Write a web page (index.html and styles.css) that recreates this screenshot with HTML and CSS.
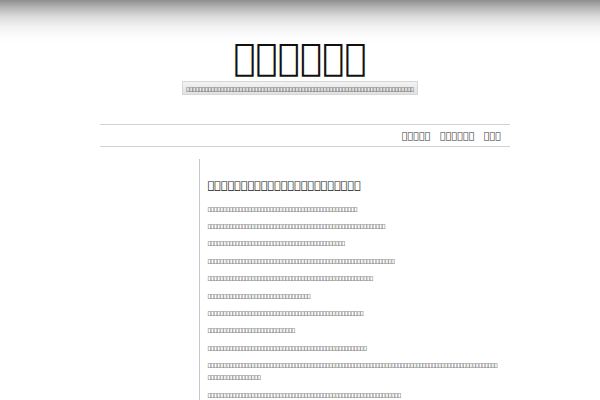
FILE: index.html
```html
<!DOCTYPE html>
<html>
<head>
<meta charset="utf-8">
<title>page</title>
<link rel="stylesheet" href="styles.css">
</head>
<body>
<header class="site-header">
  <h1 class="site-title">&#xF0000;&#xF0000;&#xF0000;&#xF0000;&#xF0000;&#xF0000;</h1>
  <div class="tagline-wrap">
    <p class="tagline">&#xF0000;&#xF0000;&#xF0000;&#xF0000;&#xF0000;&#xF0000;&#xF0000;&#xF0000;&#xF0000;&#xF0000;&#xF0000;&#xF0000;&#xF0000;&#xF0000;&#xF0000;&#xF0000;&#xF0000;&#xF0000;&#xF0000;&#xF0000;&#xF0000;&#xF0000;&#xF0000;&#xF0000;&#xF0000;&#xF0000;&#xF0000;&#xF0000;&#xF0000;&#xF0000;&#xF0000;&#xF0000;&#xF0000;&#xF0000;&#xF0000;&#xF0000;&#xF0000;&#xF0000;&#xF0000;&#xF0000;&#xF0000;&#xF0000;&#xF0000;&#xF0000;&#xF0000;&#xF0000;&#xF0000;&#xF0000;&#xF0000;&#xF0000;&#xF0000;&#xF0000;&#xF0000;&#xF0000;&#xF0000;&#xF0000;&#xF0000;&#xF0000;&#xF0000;&#xF0000;&#xF0000;&#xF0000;&#xF0000;&#xF0000;&#xF0000;&#xF0000;&#xF0000;&#xF0000;&#xF0000;&#xF0000;&#xF0000;&#xF0000;&#xF0000;</p>
  </div>
</header>
<nav class="nav">
  <a class="nav-item" href="#">&#xF0000;&#xF0000;&#xF0000;&#xF0000;&#xF0000;</a>
  <a class="nav-item" href="#">&#xF0000;&#xF0000;&#xF0000;&#xF0000;&#xF0000;&#xF0000;</a>
  <a class="nav-item" href="#">&#xF0000;&#xF0000;&#xF0000;</a>
</nav>
<div class="main">
  <aside class="sidebar"></aside>
  <article class="content">
    <h2 class="post-title">&#xF0000;&#xF0000;&#xF0000;&#xF0000;&#xF0000;&#xF0000;&#xF0000;&#xF0000;&#xF0000;&#xF0000;&#xF0000;&#xF0000;&#xF0000;&#xF0000;&#xF0000;&#xF0000;&#xF0000;&#xF0000;&#xF0000;&#xF0000;&#xF0000;&#xF0000;&#xF0000;</h2>
    <p>&#xF0000;&#xF0000;&#xF0000;&#xF0000;&#xF0000;&#xF0000;&#xF0000;&#xF0000;&#xF0000;&#xF0000;&#xF0000;&#xF0000;&#xF0000;&#xF0000;&#xF0000;&#xF0000;&#xF0000;&#xF0000;&#xF0000;&#xF0000;&#xF0000;&#xF0000;&#xF0000;&#xF0000;&#xF0000;&#xF0000;&#xF0000;&#xF0000;&#xF0000;&#xF0000;&#xF0000;&#xF0000;&#xF0000;&#xF0000;&#xF0000;&#xF0000;&#xF0000;&#xF0000;&#xF0000;&#xF0000;&#xF0000;&#xF0000;&#xF0000;&#xF0000;&#xF0000;&#xF0000;&#xF0000;&#xF0000;</p>
    <p>&#xF0000;&#xF0000;&#xF0000;&#xF0000;&#xF0000;&#xF0000;&#xF0000;&#xF0000;&#xF0000;&#xF0000;&#xF0000;&#xF0000;&#xF0000;&#xF0000;&#xF0000;&#xF0000;&#xF0000;&#xF0000;&#xF0000;&#xF0000;&#xF0000;&#xF0000;&#xF0000;&#xF0000;&#xF0000;&#xF0000;&#xF0000;&#xF0000;&#xF0000;&#xF0000;&#xF0000;&#xF0000;&#xF0000;&#xF0000;&#xF0000;&#xF0000;&#xF0000;&#xF0000;&#xF0000;&#xF0000;&#xF0000;&#xF0000;&#xF0000;&#xF0000;&#xF0000;&#xF0000;&#xF0000;&#xF0000;&#xF0000;&#xF0000;&#xF0000;&#xF0000;&#xF0000;&#xF0000;&#xF0000;&#xF0000;&#xF0000;</p>
    <p>&#xF0000;&#xF0000;&#xF0000;&#xF0000;&#xF0000;&#xF0000;&#xF0000;&#xF0000;&#xF0000;&#xF0000;&#xF0000;&#xF0000;&#xF0000;&#xF0000;&#xF0000;&#xF0000;&#xF0000;&#xF0000;&#xF0000;&#xF0000;&#xF0000;&#xF0000;&#xF0000;&#xF0000;&#xF0000;&#xF0000;&#xF0000;&#xF0000;&#xF0000;&#xF0000;&#xF0000;&#xF0000;&#xF0000;&#xF0000;&#xF0000;&#xF0000;&#xF0000;&#xF0000;&#xF0000;&#xF0000;&#xF0000;&#xF0000;&#xF0000;&#xF0000;</p>
    <p>&#xF0000;&#xF0000;&#xF0000;&#xF0000;&#xF0000;&#xF0000;&#xF0000;&#xF0000;&#xF0000;&#xF0000;&#xF0000;&#xF0000;&#xF0000;&#xF0000;&#xF0000;&#xF0000;&#xF0000;&#xF0000;&#xF0000;&#xF0000;&#xF0000;&#xF0000;&#xF0000;&#xF0000;&#xF0000;&#xF0000;&#xF0000;&#xF0000;&#xF0000;&#xF0000;&#xF0000;&#xF0000;&#xF0000;&#xF0000;&#xF0000;&#xF0000;&#xF0000;&#xF0000;&#xF0000;&#xF0000;&#xF0000;&#xF0000;&#xF0000;&#xF0000;&#xF0000;&#xF0000;&#xF0000;&#xF0000;&#xF0000;&#xF0000;&#xF0000;&#xF0000;&#xF0000;&#xF0000;&#xF0000;&#xF0000;&#xF0000;&#xF0000;&#xF0000;&#xF0000;</p>
    <p>&#xF0000;&#xF0000;&#xF0000;&#xF0000;&#xF0000;&#xF0000;&#xF0000;&#xF0000;&#xF0000;&#xF0000;&#xF0000;&#xF0000;&#xF0000;&#xF0000;&#xF0000;&#xF0000;&#xF0000;&#xF0000;&#xF0000;&#xF0000;&#xF0000;&#xF0000;&#xF0000;&#xF0000;&#xF0000;&#xF0000;&#xF0000;&#xF0000;&#xF0000;&#xF0000;&#xF0000;&#xF0000;&#xF0000;&#xF0000;&#xF0000;&#xF0000;&#xF0000;&#xF0000;&#xF0000;&#xF0000;&#xF0000;&#xF0000;&#xF0000;&#xF0000;&#xF0000;&#xF0000;&#xF0000;&#xF0000;&#xF0000;&#xF0000;&#xF0000;&#xF0000;&#xF0000;</p>
    <p>&#xF0000;&#xF0000;&#xF0000;&#xF0000;&#xF0000;&#xF0000;&#xF0000;&#xF0000;&#xF0000;&#xF0000;&#xF0000;&#xF0000;&#xF0000;&#xF0000;&#xF0000;&#xF0000;&#xF0000;&#xF0000;&#xF0000;&#xF0000;&#xF0000;&#xF0000;&#xF0000;&#xF0000;&#xF0000;&#xF0000;&#xF0000;&#xF0000;&#xF0000;&#xF0000;&#xF0000;&#xF0000;&#xF0000;</p>
    <p>&#xF0000;&#xF0000;&#xF0000;&#xF0000;&#xF0000;&#xF0000;&#xF0000;&#xF0000;&#xF0000;&#xF0000;&#xF0000;&#xF0000;&#xF0000;&#xF0000;&#xF0000;&#xF0000;&#xF0000;&#xF0000;&#xF0000;&#xF0000;&#xF0000;&#xF0000;&#xF0000;&#xF0000;&#xF0000;&#xF0000;&#xF0000;&#xF0000;&#xF0000;&#xF0000;&#xF0000;&#xF0000;&#xF0000;&#xF0000;&#xF0000;&#xF0000;&#xF0000;&#xF0000;&#xF0000;&#xF0000;&#xF0000;&#xF0000;&#xF0000;&#xF0000;&#xF0000;&#xF0000;&#xF0000;&#xF0000;&#xF0000;&#xF0000;</p>
    <p>&#xF0000;&#xF0000;&#xF0000;&#xF0000;&#xF0000;&#xF0000;&#xF0000;&#xF0000;&#xF0000;&#xF0000;&#xF0000;&#xF0000;&#xF0000;&#xF0000;&#xF0000;&#xF0000;&#xF0000;&#xF0000;&#xF0000;&#xF0000;&#xF0000;&#xF0000;&#xF0000;&#xF0000;&#xF0000;&#xF0000;&#xF0000;&#xF0000;</p>
    <p>&#xF0000;&#xF0000;&#xF0000;&#xF0000;&#xF0000;&#xF0000;&#xF0000;&#xF0000;&#xF0000;&#xF0000;&#xF0000;&#xF0000;&#xF0000;&#xF0000;&#xF0000;&#xF0000;&#xF0000;&#xF0000;&#xF0000;&#xF0000;&#xF0000;&#xF0000;&#xF0000;&#xF0000;&#xF0000;&#xF0000;&#xF0000;&#xF0000;&#xF0000;&#xF0000;&#xF0000;&#xF0000;&#xF0000;&#xF0000;&#xF0000;&#xF0000;&#xF0000;&#xF0000;&#xF0000;&#xF0000;&#xF0000;&#xF0000;&#xF0000;&#xF0000;&#xF0000;&#xF0000;&#xF0000;&#xF0000;&#xF0000;&#xF0000;&#xF0000;</p>
    <p>&#xF0000;&#xF0000;&#xF0000;&#xF0000;&#xF0000;&#xF0000;&#xF0000;&#xF0000;&#xF0000;&#xF0000;&#xF0000;&#xF0000;&#xF0000;&#xF0000;&#xF0000;&#xF0000;&#xF0000;&#xF0000;&#xF0000;&#xF0000;&#xF0000;&#xF0000;&#xF0000;&#xF0000;&#xF0000;&#xF0000;&#xF0000;&#xF0000;&#xF0000;&#xF0000;&#xF0000;&#xF0000;&#xF0000;&#xF0000;&#xF0000;&#xF0000;&#xF0000;&#xF0000;&#xF0000;&#xF0000;&#xF0000;&#xF0000;&#xF0000;&#xF0000;&#xF0000;&#xF0000;&#xF0000;&#xF0000;&#xF0000;&#xF0000;&#xF0000;&#xF0000;&#xF0000;&#xF0000;&#xF0000;&#xF0000;&#xF0000;&#xF0000;&#xF0000;&#xF0000;&#xF0000;&#xF0000;&#xF0000;&#xF0000;&#xF0000;&#xF0000;&#xF0000;&#xF0000;&#xF0000;&#xF0000;&#xF0000;&#xF0000;&#xF0000;&#xF0000;&#xF0000;&#xF0000;&#xF0000;&#xF0000;&#xF0000;&#xF0000;&#xF0000;&#xF0000;&#xF0000;&#xF0000;&#xF0000;&#xF0000;&#xF0000;&#xF0000;&#xF0000;&#xF0000;&#xF0000;&#xF0000;&#xF0000;&#xF0000;&#xF0000;&#xF0000;&#xF0000;&#xF0000;&#xF0000;&#xF0000;&#xF0000;&#xF0000;&#xF0000;&#xF0000;&#xF0000;&#xF0000;&#xF0000;&#xF0000;&#xF0000;&#xF0000;</p>
    <p>&#xF0000;&#xF0000;&#xF0000;&#xF0000;&#xF0000;&#xF0000;&#xF0000;&#xF0000;&#xF0000;&#xF0000;&#xF0000;&#xF0000;&#xF0000;&#xF0000;&#xF0000;&#xF0000;&#xF0000;&#xF0000;&#xF0000;&#xF0000;&#xF0000;&#xF0000;&#xF0000;&#xF0000;&#xF0000;&#xF0000;&#xF0000;&#xF0000;&#xF0000;&#xF0000;&#xF0000;&#xF0000;&#xF0000;&#xF0000;&#xF0000;&#xF0000;&#xF0000;&#xF0000;&#xF0000;&#xF0000;&#xF0000;&#xF0000;&#xF0000;&#xF0000;&#xF0000;&#xF0000;&#xF0000;&#xF0000;&#xF0000;&#xF0000;&#xF0000;&#xF0000;&#xF0000;&#xF0000;&#xF0000;&#xF0000;&#xF0000;&#xF0000;&#xF0000;&#xF0000;&#xF0000;&#xF0000;</p>
  </article>
</div>
</body>
</html>
```
FILE: styles.css
```css
html, body {
  margin: 0;
  padding: 0;
  background: #fff;
}
body {
  font-family: "DejaVu Sans", sans-serif;
  color: #333;
  overflow: hidden;
}
.site-header {
  padding-top: 39px;
  background: linear-gradient(to bottom, #8e8e8e 0px, #b8b8b8 8px, #dcdcdc 17px, #f2f2f2 27px, #fdfdfd 37px, #fff 44px);
  height: 56px;
}
.site-title {
  margin: 0 0 4px;
  text-align: center;
  font-size: 37px;
  line-height: 38px;
  font-weight: bold;
  color: #111;
}
.tagline-wrap {
  display: flex;
  justify-content: center;
}
.tagline {
  margin: 0;
  padding: 2px 3px 0;
  height: 10px;
  font-size: 5.4px;
  letter-spacing: -0.12px;
  line-height: 10px;
  color: #222;
  white-space: nowrap;
  background: linear-gradient(to bottom, #f3f3f3, #e1e1e1);
  border: 1px solid #d6d6d6;
}
.nav {
  margin: 29px 0 0 100px;
  width: 401px;
  height: 21px;
  padding-right: 9px;
  border-top: 1px solid #d2d2d2;
  border-bottom: 1px solid #d2d2d2;
  display: flex;
  justify-content: flex-end;
  align-items: center;
  gap: 9.3px;
}
.nav-item {
  font-size: 9.6px;
  line-height: 21px;
  color: #333;
  text-decoration: none;
}
.main {
  display: flex;
  margin: 12px 0 0 100px;
  width: 410px;
}
.sidebar {
  width: 99px;
  flex: none;
}
.content {
  border-left: 1px solid #c8c8c8;
  padding: 17px 0 0 7.7px;
  width: 291px;
  min-height: 300px;
}
.post-title {
  margin: 0 0 6.7px;
  font-size: 11.1px;
  line-height: 20px;
  font-weight: normal;
  color: #222;
  line-break: anywhere;
  word-break: break-all;
}
.content p {
  margin: 0 0 5.4px;
  font-size: 5.4px;
  letter-spacing: -0.12px;
  line-height: 12px;
  color: #222;
  line-break: anywhere;
  word-break: break-all;
}
```
